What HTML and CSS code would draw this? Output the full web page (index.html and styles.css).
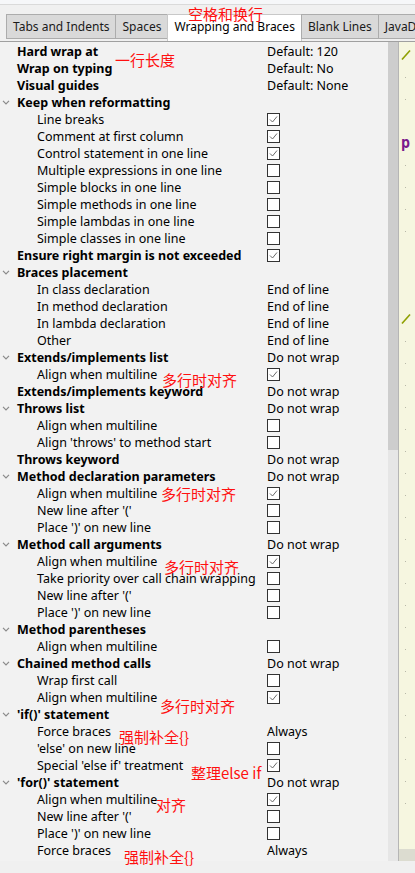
FILE: index.html
```html
<!DOCTYPE html>
<html>
<head>
<meta charset="utf-8">
<link rel="stylesheet" href="styles.css">
</head>
<body>
<div class="topbar"></div>
<div class="tabs">
  <div class="tab">Tabs and Indents</div>
  <div class="tab">Spaces</div>
  <div class="tab active">Wrapping and Braces</div>
  <div class="tab">Blank Lines</div>
  <div class="tab">JavaDoc</div>
</div>
<div class="main">
  <div class="panel">
    <div class="row h"><div class="lbl"><span class="slot"></span>Hard wrap at</div><div class="val">Default: 120</div></div>
    <div class="row h"><div class="lbl"><span class="slot"></span>Wrap on typing</div><div class="val">Default: No</div></div>
    <div class="row h"><div class="lbl"><span class="slot"></span>Visual guides</div><div class="val">Default: None</div></div>
    <div class="row h"><div class="lbl"><span class="slot"><svg class="chev" width="8" height="5" viewBox="0 0 8 5"><polyline points="1,0.8 4,3.8 7,0.8"/></svg></span>Keep when reformatting</div><div class="val"></div></div>
    <div class="row c"><div class="lbl">Line breaks</div><div class="val"><span class="cb on"><svg width="11" height="11" viewBox="0 0 11 11"><polyline points="2,5.5 4.5,8 9,2.5"/></svg></span></div></div>
    <div class="row c"><div class="lbl">Comment at first column</div><div class="val"><span class="cb on"><svg width="11" height="11" viewBox="0 0 11 11"><polyline points="2,5.5 4.5,8 9,2.5"/></svg></span></div></div>
    <div class="row c"><div class="lbl">Control statement in one line</div><div class="val"><span class="cb on"><svg width="11" height="11" viewBox="0 0 11 11"><polyline points="2,5.5 4.5,8 9,2.5"/></svg></span></div></div>
    <div class="row c"><div class="lbl">Multiple expressions in one line</div><div class="val"><span class="cb"></span></div></div>
    <div class="row c"><div class="lbl">Simple blocks in one line</div><div class="val"><span class="cb"></span></div></div>
    <div class="row c"><div class="lbl">Simple methods in one line</div><div class="val"><span class="cb"></span></div></div>
    <div class="row c"><div class="lbl">Simple lambdas in one line</div><div class="val"><span class="cb"></span></div></div>
    <div class="row c"><div class="lbl">Simple classes in one line</div><div class="val"><span class="cb"></span></div></div>
    <div class="row h"><div class="lbl"><span class="slot"></span>Ensure right margin is not exceeded</div><div class="val"><span class="cb on"><svg width="11" height="11" viewBox="0 0 11 11"><polyline points="2,5.5 4.5,8 9,2.5"/></svg></span></div></div>
    <div class="row h"><div class="lbl"><span class="slot"><svg class="chev" width="8" height="5" viewBox="0 0 8 5"><polyline points="1,0.8 4,3.8 7,0.8"/></svg></span>Braces placement</div><div class="val"></div></div>
    <div class="row c"><div class="lbl">In class declaration</div><div class="val">End of line</div></div>
    <div class="row c"><div class="lbl">In method declaration</div><div class="val">End of line</div></div>
    <div class="row c"><div class="lbl">In lambda declaration</div><div class="val">End of line</div></div>
    <div class="row c"><div class="lbl">Other</div><div class="val">End of line</div></div>
    <div class="row h"><div class="lbl"><span class="slot"><svg class="chev" width="8" height="5" viewBox="0 0 8 5"><polyline points="1,0.8 4,3.8 7,0.8"/></svg></span>Extends/implements list</div><div class="val">Do not wrap</div></div>
    <div class="row c"><div class="lbl">Align when multiline</div><div class="val"><span class="cb on"><svg width="11" height="11" viewBox="0 0 11 11"><polyline points="2,5.5 4.5,8 9,2.5"/></svg></span></div></div>
    <div class="row h"><div class="lbl"><span class="slot"></span>Extends/implements keyword</div><div class="val">Do not wrap</div></div>
    <div class="row h"><div class="lbl"><span class="slot"><svg class="chev" width="8" height="5" viewBox="0 0 8 5"><polyline points="1,0.8 4,3.8 7,0.8"/></svg></span>Throws list</div><div class="val">Do not wrap</div></div>
    <div class="row c"><div class="lbl">Align when multiline</div><div class="val"><span class="cb"></span></div></div>
    <div class="row c"><div class="lbl">Align 'throws' to method start</div><div class="val"><span class="cb"></span></div></div>
    <div class="row h"><div class="lbl"><span class="slot"></span>Throws keyword</div><div class="val">Do not wrap</div></div>
    <div class="row h"><div class="lbl"><span class="slot"><svg class="chev" width="8" height="5" viewBox="0 0 8 5"><polyline points="1,0.8 4,3.8 7,0.8"/></svg></span>Method declaration parameters</div><div class="val">Do not wrap</div></div>
    <div class="row c"><div class="lbl">Align when multiline</div><div class="val"><span class="cb on"><svg width="11" height="11" viewBox="0 0 11 11"><polyline points="2,5.5 4.5,8 9,2.5"/></svg></span></div></div>
    <div class="row c"><div class="lbl">New line after '('</div><div class="val"><span class="cb"></span></div></div>
    <div class="row c"><div class="lbl">Place ')' on new line</div><div class="val"><span class="cb"></span></div></div>
    <div class="row h"><div class="lbl"><span class="slot"><svg class="chev" width="8" height="5" viewBox="0 0 8 5"><polyline points="1,0.8 4,3.8 7,0.8"/></svg></span>Method call arguments</div><div class="val">Do not wrap</div></div>
    <div class="row c"><div class="lbl">Align when multiline</div><div class="val"><span class="cb on"><svg width="11" height="11" viewBox="0 0 11 11"><polyline points="2,5.5 4.5,8 9,2.5"/></svg></span></div></div>
    <div class="row c"><div class="lbl">Take priority over call chain wrapping</div><div class="val"><span class="cb"></span></div></div>
    <div class="row c"><div class="lbl">New line after '('</div><div class="val"><span class="cb"></span></div></div>
    <div class="row c"><div class="lbl">Place ')' on new line</div><div class="val"><span class="cb"></span></div></div>
    <div class="row h"><div class="lbl"><span class="slot"><svg class="chev" width="8" height="5" viewBox="0 0 8 5"><polyline points="1,0.8 4,3.8 7,0.8"/></svg></span>Method parentheses</div><div class="val"></div></div>
    <div class="row c"><div class="lbl">Align when multiline</div><div class="val"><span class="cb"></span></div></div>
    <div class="row h"><div class="lbl"><span class="slot"><svg class="chev" width="8" height="5" viewBox="0 0 8 5"><polyline points="1,0.8 4,3.8 7,0.8"/></svg></span>Chained method calls</div><div class="val">Do not wrap</div></div>
    <div class="row c"><div class="lbl">Wrap first call</div><div class="val"><span class="cb"></span></div></div>
    <div class="row c"><div class="lbl">Align when multiline</div><div class="val"><span class="cb on"><svg width="11" height="11" viewBox="0 0 11 11"><polyline points="2,5.5 4.5,8 9,2.5"/></svg></span></div></div>
    <div class="row h"><div class="lbl"><span class="slot"><svg class="chev" width="8" height="5" viewBox="0 0 8 5"><polyline points="1,0.8 4,3.8 7,0.8"/></svg></span>'if()' statement</div><div class="val"></div></div>
    <div class="row c"><div class="lbl">Force braces</div><div class="val">Always</div></div>
    <div class="row c"><div class="lbl">'else' on new line</div><div class="val"><span class="cb"></span></div></div>
    <div class="row c"><div class="lbl">Special 'else if' treatment</div><div class="val"><span class="cb on"><svg width="11" height="11" viewBox="0 0 11 11"><polyline points="2,5.5 4.5,8 9,2.5"/></svg></span></div></div>
    <div class="row h"><div class="lbl"><span class="slot"><svg class="chev" width="8" height="5" viewBox="0 0 8 5"><polyline points="1,0.8 4,3.8 7,0.8"/></svg></span>'for()' statement</div><div class="val">Do not wrap</div></div>
    <div class="row c"><div class="lbl">Align when multiline</div><div class="val"><span class="cb on"><svg width="11" height="11" viewBox="0 0 11 11"><polyline points="2,5.5 4.5,8 9,2.5"/></svg></span></div></div>
    <div class="row c"><div class="lbl">New line after '('</div><div class="val"><span class="cb"></span></div></div>
    <div class="row c"><div class="lbl">Place ')' on new line</div><div class="val"><span class="cb"></span></div></div>
    <div class="row c"><div class="lbl">Force braces</div><div class="val">Always</div></div>
  </div>
  <div class="scroll"><div class="thumb"></div></div>
  <div class="editor">
    <div class="ln"><svg width="10" height="10" viewBox="0 0 10 10"><line x1="1" y1="9.5" x2="9" y2="0.5" class="sl"/></svg></div>
    <div class="ln"><span class="dot"></span></div>
    <div class="ln"><span class="dot"></span></div>
    <div class="ln"></div>
    <div class="ln"><span class="kw">p</span></div>
    <div class="ln"><span class="dot"></span></div>
    <div class="ln"><span class="dot"></span></div>
    <div class="ln"><span class="dot"></span></div>
    <div class="ln"><span class="dot"></span></div>
    <div class="ln"></div>
    <div class="ln"></div>
    <div class="ln"></div>
    <div class="ln"><svg width="10" height="10" viewBox="0 0 10 10"><line x1="1" y1="9.5" x2="9" y2="0.5" class="sl"/></svg></div>
    <div class="ln"><span class="dot"></span></div>
    <div class="ln"><span class="dot"></span></div>
    <div class="ln"><span class="dot"></span></div>
    <div class="ln"><span class="dot"></span></div>
    <div class="ln"><span class="dot"></span></div>
    <div class="ln"><span class="dot"></span></div>
    <div class="ln"><span class="dot"></span></div>
    <div class="ln"><span class="dot"></span></div>
    <div class="ln"><span class="dot"></span></div>
    <div class="ln"><span class="dot"></span></div>
    <div class="ln"><span class="dot"></span></div>
    <div class="ln"><span class="dot"></span></div>
    <div class="ln"><span class="dot"></span></div>
    <div class="ln"><span class="dot"></span></div>
    <div class="ln"><span class="dot"></span></div>
    <div class="ln"><span class="dot"></span></div>
    <div class="ln"><span class="dot"></span></div>
    <div class="ln"><span class="dot"></span></div>
    <div class="ln"><span class="dot"></span></div>
    <div class="ln"><span class="dot"></span></div>
    <div class="ln"><span class="dot"></span></div>
    <div class="ln"><span class="dot"></span></div>
    <div class="hbar"></div>
  </div>
</div>
<div class="bottom"></div>

<div class="note n1">空格和换行</div>
<div class="note n2">一行长度</div>
<div class="note n3">多行时对齐</div>
<div class="note n4">多行时对齐</div>
<div class="note n5">多行时对齐</div>
<div class="note n6">多行时对齐</div>
<div class="note n7">强制补全{}</div>
<div class="note n8">整理else if</div>
<div class="note n9">对齐</div>
<div class="note n10">强制补全{}</div>
</body>
</html>
```

FILE: styles.css
```css
html, body {
  margin: 0;
  padding: 0;
}
body {
  width: 415px;
  height: 873px;
  overflow: hidden;
  background: #f0f0f0;
  font-family: "Noto Sans", "Open Sans", sans-serif;
  font-size: 12.5px;
  color: #000;
  position: relative;
}
.topbar {
  height: 4px;
  background: #f6f7f9;
  border-bottom: 1px solid #dadada;
}
.tabs {
  display: flex;
  align-items: flex-start;
  height: 36px;
  padding-left: 6px;
  border-bottom: 1px solid #a0a0a0;
  overflow: hidden;
}
.tab {
  margin-top: 9px;
  height: 23px;
  line-height: 24px;
  padding: 0 6px;
  font-size: 12px;
  background: #d9d9d9;
  border: 1px solid #acacac;
  margin-left: -1px;
  white-space: nowrap;
  color: #1a1a1a;
}
.tab:first-child {
  margin-left: 0;
}
.tab.active {
  background: #fff;
  height: 27px;
  border-bottom: none;
  border-color: #c8c8c8;
  color: #000;
}
.main {
  display: flex;
  height: 819px;
}
.panel {
  width: 388px;
  flex: none;
  background: #f2f2f2;
  padding-top: 1px;
  overflow: hidden;
}
.row {
  display: grid;
  grid-template-columns: 267px 1fr;
  height: 17px;
  line-height: 17px;
  white-space: nowrap;
}
.row.h {
  font-weight: bold;
}
.row.c .lbl {
  padding-left: 37px;
}
.lbl {
  display: flex;
  align-items: center;
}
.slot {
  width: 17px;
  flex: none;
  display: flex;
  align-items: center;
  padding-left: 2px;
  box-sizing: border-box;
}
.chev polyline {
  fill: none;
  stroke: #8a8a8a;
  stroke-width: 1.2;
}
.val {
  display: flex;
  align-items: center;
  font-weight: normal;
}
.cb {
  width: 13px;
  height: 13px;
  box-sizing: border-box;
  border: 1px solid #333;
  background: #fff;
  display: flex;
  align-items: center;
  justify-content: center;
}
.cb polyline {
  fill: none;
  stroke: #6a6a6a;
  stroke-width: 1;
}
.scroll {
  width: 10px;
  flex: none;
  background: #e6e6e6;
}
.thumb {
  height: 408px;
  background: #cdcdcd;
}
.editor {
  flex: 1;
  background: #f6f6e0;
  border-left: 1px solid #b5b5b5;
  padding-top: 2px;
  overflow: hidden;
  position: relative;
}
.ln {
  height: 22px;
  padding-left: 2px;
  display: flex;
  align-items: center;
}
.sl {
  stroke: #8fa000;
  stroke-width: 1.6;
}
.dot {
  width: 1px;
  height: 1px;
  background: #b8b8a8;
  margin-left: 4px;
}
.kw {
  color: #7b1b8c;
  font-weight: bold;
  font-size: 15px;
  font-family: "DejaVu Sans Mono", monospace;
}
.hbar {
  position: absolute;
  left: 0;
  right: 0;
  bottom: 0;
  height: 12px;
  background: #dcdcd0;
}
.bottom {
  height: 13px;
  background: #f0f0f0;
}
.note {
  position: absolute;
  color: #ff1010;
  font-family: "Noto Sans CJK SC", sans-serif;
  font-size: 15px;
  line-height: 16px;
  white-space: nowrap;
}
.n1 { left: 188px; top: 6px; }
.n2 { left: 115px; top: 52px; }
.n3 { left: 162px; top: 372px; }
.n4 { left: 161px; top: 486px; }
.n5 { left: 164px; top: 559px; }
.n6 { left: 160px; top: 698px; }
.n7 { left: 119px; top: 729px; }
.n8 { left: 191px; top: 765px; }
.n9 { left: 156px; top: 797px; }
.n10 { left: 124px; top: 849px; }
```
